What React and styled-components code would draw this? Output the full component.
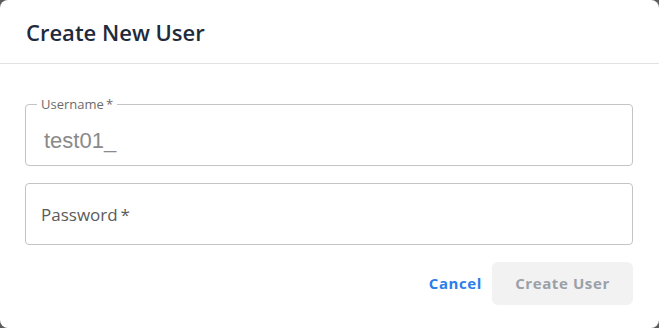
import React from 'react';
import styled, { createGlobalStyle } from 'styled-components';

const GlobalStyle = createGlobalStyle`
  html, body {
    margin: 0;
    padding: 0;
    background: #5c5c5c;
  }
  * {
    box-sizing: border-box;
  }
`;

const Dialog = styled.div`
  width: 659px;
  height: 328px;
  background: #fff;
  border-radius: 8px;
  display: flex;
  flex-direction: column;
  font-family: 'Open Sans', sans-serif;
`;

const Header = styled.div`
  height: 64px;
  padding: 0 26px;
  display: flex;
  align-items: center;
  border-bottom: 1px solid #e2e2e2;
`;

const Title = styled.h2`
  margin: 0;
  font-size: 22px;
  font-weight: 600;
  color: #1f2a3c;
`;

const Body = styled.div`
  padding: 40px 26px 0 25px;
  display: flex;
  flex-direction: column;
  gap: 17px;
`;

const Field = styled.div`
  position: relative;
  height: 62px;
  padding-left: ${(p) => (p.$filled ? '18px' : '15px')};
  border: 1px solid #c4c4c4;
  border-radius: 4px;
  display: flex;
  align-items: center;
`;

const FloatLabel = styled.span`
  position: absolute;
  top: -9px;
  left: 11px;
  padding: 0 4px;
  background: #fff;
  font-size: 13px;
  line-height: 16px;
  color: #6b6b6b;
`;

const Value = styled.span`
  font-family: 'Liberation Sans', Arial, sans-serif;
  font-size: 22px;
  color: #8a8a8a;
  margin-top: 12px;
`;

const Placeholder = styled.span`
  font-size: 17px;
  color: #5b5b5b;
`;

const Actions = styled.div`
  margin-top: 17px;
  padding-right: 26px;
  display: flex;
  justify-content: flex-end;
  align-items: center;
  gap: 10px;
`;

const TextButton = styled.button`
  border: none;
  background: none;
  padding: 0;
  margin-top: -2px;
  font-family: 'Open Sans', sans-serif;
  font-size: 15px;
  font-weight: 700;
  letter-spacing: 0.6px;
  color: #2b7de9;
`;

const FilledButton = styled.button`
  width: 141px;
  height: 43px;
  padding-bottom: 2px;
  border: none;
  border-radius: 6px;
  background: #f2f2f2;
  font-family: 'Open Sans', sans-serif;
  font-size: 15px;
  font-weight: 700;
  letter-spacing: 0.6px;
  color: #9aa0a8;
`;

export default function App() {
  return (
    <>
      <GlobalStyle />
      <Dialog>
        <Header>
          <Title>Create New User</Title>
        </Header>
        <Body>
          <Field $filled>
            <FloatLabel>Username{'\u2009'}*</FloatLabel>
            <Value>test01_</Value>
          </Field>
          <Field>
            <Placeholder>Password{'\u2009'}*</Placeholder>
          </Field>
        </Body>
        <Actions>
          <TextButton>Cancel</TextButton>
          <FilledButton>Create User</FilledButton>
        </Actions>
      </Dialog>
    </>
  );
}
